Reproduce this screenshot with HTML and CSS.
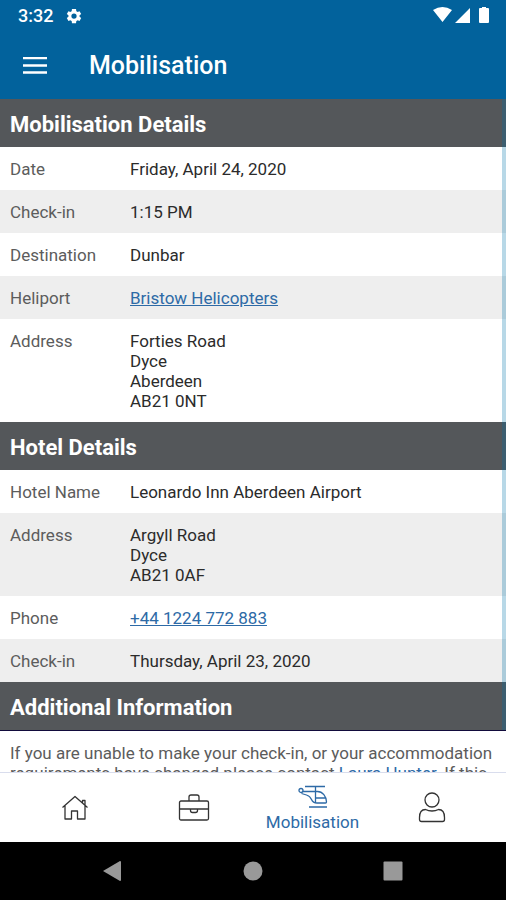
FILE: index.html
```html
<!DOCTYPE html>
<html lang="en">
<head>
<meta charset="utf-8">
<meta name="viewport" content="width=device-width, initial-scale=1">
<title>Mobilisation</title>
<link rel="stylesheet" href="styles.css">
</head>
<body>
<div class="app">
  <header class="top">
    <div class="status">
      <span>3:32</span>
      <svg class="gear" viewBox="0 0 24 24" width="18" height="18"><path fill="currentColor" fill-rule="evenodd" d="M19.4 13a7.500 7.500 0 0 0 0-2l2.200-1.700-2.200-3.800-2.600 1a8 8 0 0 0-1.700-1L14.700 2.500H9.300L8.900 5.500a8 8 0 0 0-1.700 1l-2.600-1-2.200 3.800L4.600 11a7.500 7.500 0 0 0 0 2l-2.200 1.700 2.200 3.800 2.600-1a8 8 0 0 0 1.700 1l.4 3h5.400l.4-3a8 8 0 0 0 1.700-1l2.600 1 2.200-3.800zM12 15.500a3.500 3.500 0 1 1 0-7 3.500 3.500 0 0 1 0 7z"/></svg>
      <svg class="signals" viewBox="0 0 58 18" width="58" height="18" fill="currentColor"><path d="M1 3Q10.500-3 20 3L10.500 15zM38 1v15H23zM50 0h4v1h2q1 0 1 1v13q0 1-1 1h-8q-1 0-1-1V2q0-1 1-1h2z"/></svg>
    </div>
    <div class="bar">
      <button class="menu" type="button" aria-label="Menu"><svg viewBox="0 0 24 18" width="24" height="18"><path d="M0 1h24M0 8.500h24M0 15.500h24" stroke="currentColor" stroke-width="2.500"/></svg></button>
      <h1>Mobilisation</h1>
    </div>
  </header>

  <main class="content">
    <section>
      <h2>Mobilisation Details</h2>
      <dl>
        <div class="row"><dt>Date</dt><dd>Friday, April 24, 2020</dd></div>
        <div class="row"><dt>Check-in</dt><dd>1:15 PM</dd></div>
        <div class="row"><dt>Destination</dt><dd>Dunbar</dd></div>
        <div class="row"><dt>Heliport</dt><dd><a href="#heliport">Bristow Helicopters</a></dd></div>
        <div class="row"><dt>Address</dt><dd>Forties Road<br>Dyce<br>Aberdeen<br>AB21 0NT</dd></div>
      </dl>
    </section>
    <section>
      <h2>Hotel Details</h2>
      <dl>
        <div class="row"><dt>Hotel Name</dt><dd>Leonardo Inn Aberdeen Airport</dd></div>
        <div class="row"><dt>Address</dt><dd>Argyll Road<br>Dyce<br>AB21 0AF</dd></div>
        <div class="row"><dt>Phone</dt><dd><a href="tel:+441224772883">+44 1224 772 883</a></dd></div>
        <div class="row"><dt>Check-in</dt><dd>Thursday, April 23, 2020</dd></div>
      </dl>
    </section>
    <section>
      <h2 class="ruled">Additional Information</h2>
      <p>If you are unable to make your check-in, or your accommodation requirements have changed please contact <a href="#contact">Laura Hunter</a>. If this</p>
    </section>
    <div class="scrollbar"></div>
  </main>

  <nav class="tabs">
    <a href="#home" aria-label="Home"><svg viewBox="0 0 28 28" width="28" height="28"><path d="M1.500 13.500L14 2.500l12.500 11M4 11.500V25h6.500v-8h6v8H24V11.500M21.500 9V6.500H24v5"/></svg></a>
    <a href="#work" aria-label="Work"><svg viewBox="0 0 32 30" width="32" height="30"><rect x="1.500" y="8" width="29" height="19" rx="1.500"/><path d="M11 8V4q0-2 2-2h6q2 0 2 2v4M1.500 16h29M12.500 16v1.500q0 2 2 2h3q2 0 2-2V16"/></svg></a>
    <a href="#mobilisation" class="active"><svg viewBox="0 0 30 24" width="30" height="24"><path d="M7 2.500h20M17.500 2.500v16M4.500 7.500h15c5 0 9 5 9 10.500q0 1-1 1H19q-4 0-5.500-3.500Q12 12 8.500 11L3.500 9.500M17.500 14h10M11 23h18"/><circle cx="3" cy="6.500" r="2"/></svg><span>Mobilisation</span></a>
    <a href="#profile" aria-label="Profile"><svg viewBox="0 0 28 32" width="28" height="32"><circle cx="14" cy="8" r="7"/><path d="M7.500 17.500q3 1.500 6.500 1.500t6.500-1.500c4 0 6 3.500 6 8v2q0 2-2 2h-21q-2 0-2-2v-2c0-4.500 2-8 6-8z"/></svg></a>
  </nav>

  <div class="system">
    <button type="button" aria-label="Back"><svg viewBox="0 0 22 22" width="22" height="22"><path d="M1 11L18 1q1 0 1 1v18q0 1-1 1z"/></svg></button>
    <button type="button" aria-label="Home screen"><svg viewBox="0 0 22 22" width="22" height="22"><circle cx="11" cy="11" r="9.500"/></svg></button>
    <button type="button" aria-label="Recent apps"><svg viewBox="0 0 22 22" width="22" height="22"><rect x="1.500" y="1.500" width="19" height="19" rx="1"/></svg></button>
  </div>
</div>
</body>
</html>
```
FILE: styles.css
```css
* { box-sizing: border-box; }

body {
  margin: 0;
  font-family: Roboto, "Liberation Sans", sans-serif;
  font-size: 17px;
  line-height: 20px;
  color: #5c5c5c;
  background: #fff;
}

h1, h2, p, dl, dd { margin: 0; }
svg { display: block; }
button { padding: 0; border: 0; background: none; color: inherit; }

.app {
  display: flex;
  flex-direction: column;
  height: 100vh;
}

.top {
  flex: none;
  background: #02629c;
  color: #fff;
}

.status {
  display: flex;
  align-items: center;
  height: 32px;
  padding: 0 16px 0 18px;
  font-weight: 500;
  font-size: 18px;
}
.gear { margin-left: 12px; }
.signals { margin-left: auto; }

.bar {
  display: flex;
  align-items: center;
  gap: 42px;
  height: 67px;
  padding: 0 23px;
}
h1 {
  font-size: 25px;
  line-height: 32px;
  font-weight: 500;
}

.content {
  position: relative;
  flex: 1;
  min-height: 0;
  overflow: hidden;
}
.scrollbar {
  position: absolute;
  top: 0;
  right: 0;
  bottom: 42px;
  width: 4px;
  background: rgba(0, 116, 170, 0.28);
}

h2 {
  padding: 14px 10px 10px;
  font-size: 22px;
  line-height: 24px;
  font-weight: 700;
  color: #fff;
  background: #54575a;
}
h2.ruled { border-bottom: 1px solid #120b3c; }

.row {
  display: flex;
  padding: 12px 10px 11px;
}
.row:nth-child(even) { background: #eee; }
dt { flex: 0 0 120px; }
dd { color: #2b2b2b; }
a { color: #2d6aa6; }

p { padding: 12px 10px; }

.tabs {
  flex: none;
  display: grid;
  grid-template-columns: repeat(4, 1fr);
  height: 70px;
  padding: 0 15px;
  border-top: 1px solid #d9dded;
  background: #fff;
}
.tabs a {
  display: flex;
  flex-direction: column;
  align-items: center;
  justify-content: center;
  gap: 4px;
  color: #333;
  text-decoration: none;
}
.tabs .active { color: #2d6aa6; }
.tabs svg {
  fill: none;
  stroke: currentColor;
  stroke-width: 1.3;
  stroke-linejoin: round;
}

.system {
  flex: none;
  display: flex;
  justify-content: center;
  align-items: center;
  gap: 118px;
  height: 58px;
  background: #000;
}
.system svg { fill: #999; }
```
